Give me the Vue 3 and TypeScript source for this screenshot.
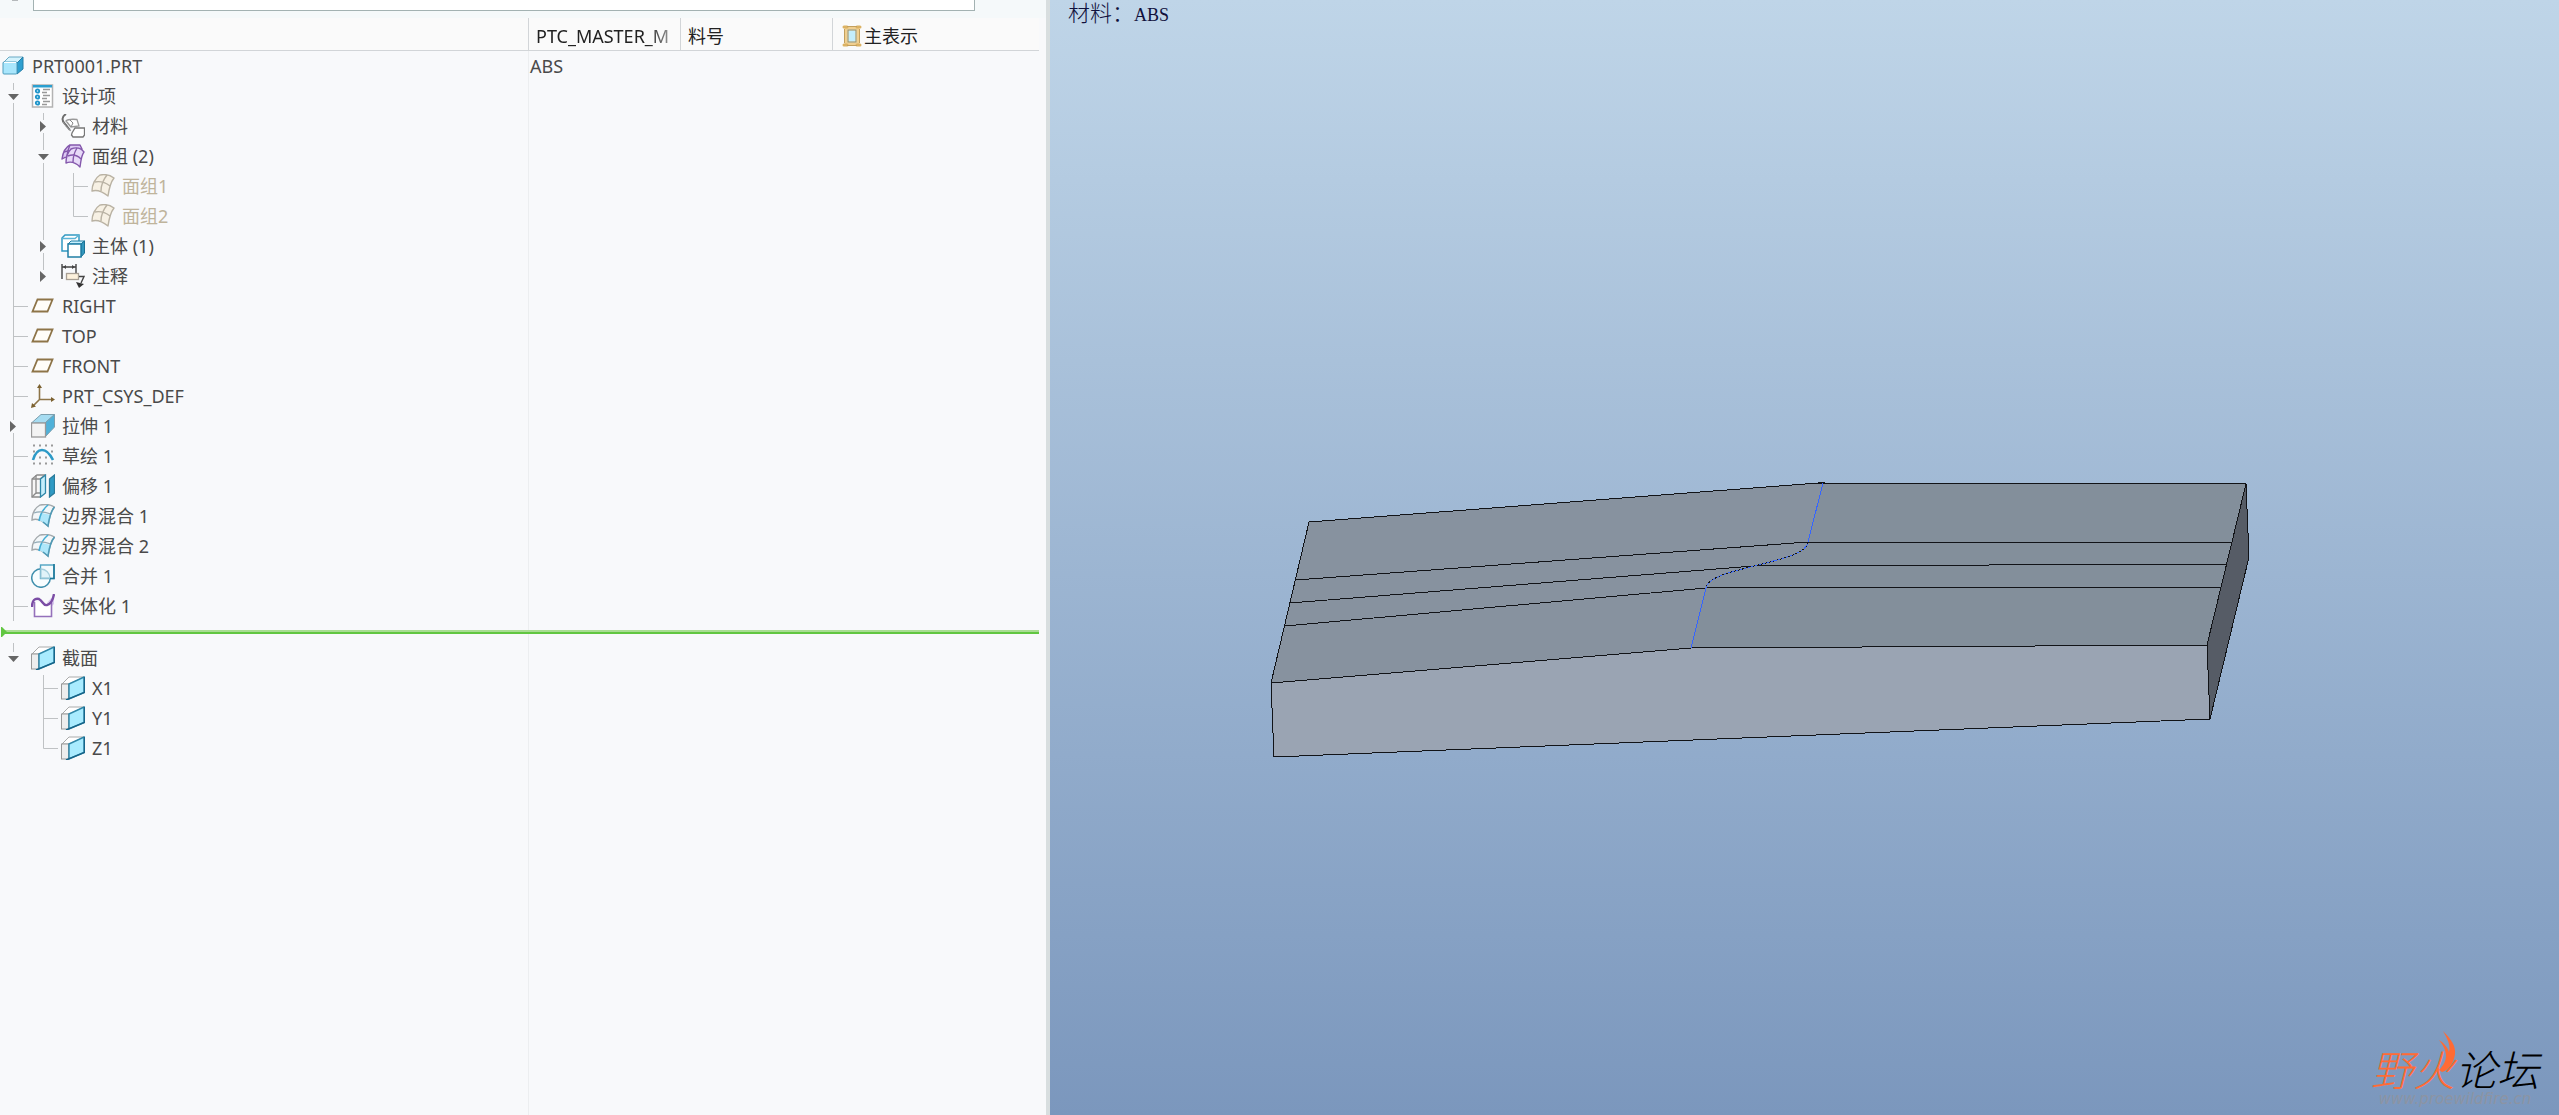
<script setup lang="ts">
import { computed, ref } from 'vue'

type Guide = 'blank' | 'line' | 'tee' | 'teeFirst' | 'elbow' | 'toggle' | 'toggleFirst' | 'toggleLast'

interface TreeRow {
  id: string
  label: string
  icon: string
  guides: Guide[]
  parent?: string
  open?: boolean
  muted?: boolean
  material?: string
}

const guidePaths: Record<Guide, string> = {
  blank: '',
  line: 'M13.5 0V30',
  tee: 'M13.5 0V30M14 15.5H28',
  teeFirst: 'M13.5 2V30M14 15.5H28',
  elbow: 'M13.5 0V15.5H28',
  toggle: 'M13.5 0V9M13.5 22V30',
  toggleFirst: 'M13.5 2V9M13.5 22V30',
  toggleLast: 'M13.5 0V9',
}

const modelRows: TreeRow[] = [
  { id: 'part', label: 'PRT0001.PRT', icon: 'part', guides: [], material: 'ABS' },
  { id: 'design', label: '设计项', icon: 'design', guides: ['toggleFirst'], open: true },
  { id: 'materials', label: '材料', icon: 'material', guides: ['line', 'toggleFirst'], parent: 'design', open: false },
  { id: 'quilts', label: '面组 (2)', icon: 'quilts', guides: ['line', 'toggle'], parent: 'design', open: true },
  { id: 'quilt1', label: '面组1', icon: 'quilt', guides: ['line', 'line', 'teeFirst'], parent: 'quilts', muted: true },
  { id: 'quilt2', label: '面组2', icon: 'quilt', guides: ['line', 'line', 'elbow'], parent: 'quilts', muted: true },
  { id: 'bodies', label: '主体 (1)', icon: 'body', guides: ['line', 'toggle'], parent: 'design', open: false },
  { id: 'notes', label: '注释', icon: 'note', guides: ['line', 'toggleLast'], parent: 'design', open: false },
  { id: 'right', label: 'RIGHT', icon: 'plane', guides: ['tee'] },
  { id: 'top', label: 'TOP', icon: 'plane', guides: ['tee'] },
  { id: 'front', label: 'FRONT', icon: 'plane', guides: ['tee'] },
  { id: 'csys', label: 'PRT_CSYS_DEF', icon: 'csys', guides: ['tee'] },
  { id: 'extrude', label: '拉伸 1', icon: 'extrude', guides: ['toggle'], open: false },
  { id: 'sketch', label: '草绘 1', icon: 'sketch', guides: ['tee'] },
  { id: 'offset', label: '偏移 1', icon: 'offset', guides: ['tee'] },
  { id: 'blend1', label: '边界混合 1', icon: 'blend', guides: ['tee'] },
  { id: 'blend2', label: '边界混合 2', icon: 'blend', guides: ['tee'] },
  { id: 'merge', label: '合并 1', icon: 'merge', guides: ['tee'] },
  { id: 'solidify', label: '实体化 1', icon: 'solidify', guides: ['tee'] },
]

const sectionRows: TreeRow[] = [
  { id: 'sections', label: '截面', icon: 'section', guides: ['toggleLast'], open: true },
  { id: 'x1', label: 'X1', icon: 'section', guides: ['blank', 'teeFirst'], parent: 'sections' },
  { id: 'y1', label: 'Y1', icon: 'section', guides: ['blank', 'tee'], parent: 'sections' },
  { id: 'z1', label: 'Z1', icon: 'section', guides: ['blank', 'elbow'], parent: 'sections' },
]

const allRows = [...modelRows, ...sectionRows]
const openIds = ref<string[]>(allRows.filter((r) => r.open).map((r) => r.id))

function isOpen(id: string): boolean {
  return openIds.value.includes(id)
}

function toggle(id: string): void {
  openIds.value = isOpen(id) ? openIds.value.filter((x) => x !== id) : [...openIds.value, id]
}

function isShown(row: TreeRow): boolean {
  if (!row.parent) return true
  const parent = allRows.find((r) => r.id === row.parent)
  return isOpen(row.parent) && (!parent || isShown(parent))
}

const groups = computed(() => [
  { id: 'model', rows: modelRows.filter(isShown) },
  { id: 'section', rows: sectionRows.filter(isShown) },
])
</script>

<template>
  <main class="workspace">
    <svg class="sprite" aria-hidden="true">
      <symbol id="i-part" viewBox="0 0 24 24">
        <path d="M2 9L8 3H22L16 9Z" fill="#d5f3fd" stroke="#6aa9c4" />
        <path d="M16 9L22 3V15L16 20Z" fill="#2f9fd0" stroke="#257fa8" />
        <rect x="2" y="8" width="14" height="12" rx="1" fill="#a9e6fc" stroke="#4f9dbd" />
        <path d="M3 8.500H15" stroke="#fff" />
      </symbol>
      <symbol id="i-design" viewBox="0 0 24 24">
        <rect x="1.500" y="1" width="20" height="22" fill="#fff" stroke="#b3b3b3" stroke-width="1.500" />
        <rect x="2" y="1" width="19" height="2.500" fill="#2b9fd0" />
        <g fill="#d9f3fd" stroke="#1f94c9" stroke-width="1.800">
          <circle cx="6.500" cy="7" r="1.700" /><circle cx="6.500" cy="13" r="1.700" /><circle cx="6.500" cy="19" r="1.700" />
        </g>
        <path d="M12 5.500H19M11 8.500H16M12 11.500H19M11 14.500H16M12 17.500H19M11 20.500H16" stroke="#999" stroke-width="1.300" />
      </symbol>
      <symbol id="i-material" viewBox="0 0 24 24">
        <path d="M5 0C0 3 1 7 4 10C6 12 7 14 9 16" fill="none" stroke="#6d6d6d" stroke-width="2" />
        <path d="M2 8C4 11 6 14 10 17" fill="none" stroke="#999" />
        <path d="M5 7C7 5 11 5 16 5.500L18 12L10 13C8 11 7 9 5 7Z" fill="#fff" stroke="#999" stroke-width="1.300" />
        <path d="M9 6L12 9L10 13" fill="none" stroke="#888" />
        <path d="M14 14H23.500V21L22 23H12L10.500 21L11 19Z" fill="#fff" stroke="#777" stroke-width="1.300" />
      </symbol>
      <symbol id="i-quilts" viewBox="0 0 24 24">
        <g fill="#dcc9f3" stroke="#8458ac" stroke-width="1.400" stroke-linejoin="round">
          <path d="M1 15C2 8 5 3 9 1H19L21 5L16 16C11 12 5 12 1 15Z" />
          <path d="M9 1C7 5 6 9 6 13M3 8C8 6 14 7 19 9" fill="none" />
          <path d="M5 19C5 13 7 8 10 5C15 3 20 4 23 8C20 12 20 17 19 23C15 19 10 17 5 19Z" fill="#e7daf8" />
          <path d="M16 4C13 9 12 14 12 18M7 12C12 10 17 12 20 15" fill="none" />
        </g>
      </symbol>
      <symbol id="i-quilt" viewBox="0 0 24 24">
        <g fill="#f7f1e4" stroke="#b9b2a3" stroke-width="1.400" stroke-linejoin="round">
          <path d="M1 17C1 11 4 4 9 1C14 0 19 1 23 4C19 9 18 15 17 22C12 18 7 15 1 17Z" />
          <path d="M16 1C12 6 10 11 10 17M4 8C9 7 15 9 19 12" fill="none" />
        </g>
      </symbol>
      <symbol id="i-body" viewBox="0 0 24 24">
        <path d="M1 4L4 1H18V14L14 17H1Z" fill="#fff" stroke="#3199c2" stroke-width="1.500" />
        <path d="M1 4.500H14L18 1" fill="none" stroke="#5bb4d6" stroke-width="1.400" />
        <path d="M7 10L10 7H23.500L20 10Z" fill="#c9f0fd" stroke="#217fa5" />
        <path d="M20 10L23.500 7V19L20 23Z" fill="#3297bd" stroke="#1a7194" />
        <rect x="7" y="10" width="13" height="13" fill="#fff" stroke="#217fa5" stroke-width="1.500" />
      </symbol>
      <symbol id="i-note" viewBox="0 0 24 24">
        <path d="M1 0V15M15 0V9M1 3H15" stroke="#444" stroke-width="1.400" fill="none" />
        <path d="M2 3L5 1V5ZM14 3L11 1V5Z" fill="#444" />
        <rect x="5.500" y="9.500" width="12" height="6" fill="#fdf1dc" stroke="#a89f94" stroke-width="1.300" />
        <path d="M18 12.500H23L20 19" fill="none" stroke="#444" stroke-width="1.400" />
        <path d="M15 18L23 20L18 24Z" fill="#333" />
      </symbol>
      <symbol id="i-plane" viewBox="0 0 24 24">
        <path d="M6.500 5.500H21.500L16.500 17.500H1.500Z" fill="#fffdf8" stroke="#8d7448" stroke-width="1.800" />
      </symbol>
      <symbol id="i-csys" viewBox="0 0 24 24">
        <path d="M8.500 2V15.500H22M8.500 15.500L2 22" fill="none" stroke="#8d7448" stroke-width="1.600" />
        <path d="M8.500 0L6 4H11ZM24 15.500L20 13V18ZM0 24L1 19L5 22.500Z" fill="#7b6130" />
      </symbol>
      <symbol id="i-extrude" viewBox="0 0 24 24">
        <path d="M0.500 9L10 0.500H23.500L14 9Z" fill="#a6dcf1" stroke="#7c9fae" />
        <path d="M14 9L23.500 0.500V13L14 23Z" fill="#4fb1d9" stroke="#7c9fae" />
        <rect x="0.500" y="9" width="14" height="14" fill="#f3f3f3" stroke="#999" stroke-width="1.300" />
      </symbol>
      <symbol id="i-sketch" viewBox="0 0 24 24">
        <path d="M2 1.500H4M8 1.500H10M14 1.500H16M20 1.500H22M2 7.500H4M20 7.500H22M8 13.500H10M14 13.500H16M2 19.500H4M8 19.500H10M14 19.500H16M20 19.500H22" stroke="#999" stroke-width="2" />
        <path d="M2 16C4 9 7 6 11 6C16 6 19 10 22 16" fill="none" stroke="#2d9ac7" stroke-width="2.600" />
      </symbol>
      <symbol id="i-offset" viewBox="0 0 24 24">
        <path d="M1 5L6 1H14V19L9 23H1Z" fill="#f7f7f7" stroke="#8b8b8b" stroke-width="1.300" />
        <path d="M1 5H9L14 1M5 1V20M1 23L5 19H9" fill="none" stroke="#8b8b8b" stroke-width="1.300" />
        <path d="M9.500 5L14.500 1V19L9.500 23Z" fill="#c6eefb" stroke="#2f87a9" stroke-width="1.300" />
        <path d="M18.500 5L23.500 1V19L18.500 23Z" fill="#2f9ac4" stroke="#2b7b9b" stroke-width="1.300" />
      </symbol>
      <symbol id="i-blend" viewBox="0 0 24 24">
        <path d="M1 16C1 9 4 4 9 1C14 0 19 0 23.500 3C19 8 18 15 17 22C12 17 6 14 1 16Z" fill="#f3f7f9" stroke="#a3a9ac" stroke-width="1.400" />
        <path d="M11 9L20 11L17 21L8 16Z" fill="#aee7fa" />
        <path d="M17 1C11 6 9 11 8 17" fill="none" stroke="#42acd4" stroke-width="1.600" />
        <path d="M3 9C8 7 14 8 20 10" fill="none" stroke="#91aab5" stroke-width="1.300" />
        <path d="M23.500 3C19 8 18 15 17 22L12 18" fill="none" stroke="#4f9ab6" stroke-width="1.600" />
      </symbol>
      <symbol id="i-merge" viewBox="0 0 24 24">
        <circle cx="10" cy="14" r="9.300" fill="#f8fdff" stroke="#3f8fad" stroke-width="1.500" />
        <rect x="9.500" y="1" width="13.500" height="13.500" fill="#f3fafc" stroke="#4fa3c2" stroke-width="1.400" />
        <path d="M10 5A9.300 9.300 0 0 1 19 14H10Z" fill="#e1f3f9" stroke="#a7cfdd" stroke-width="1.300" />
        <path d="M23 0V14.500H19" fill="none" stroke="#1d7899" stroke-width="1.600" />
      </symbol>
      <symbol id="i-solidify" viewBox="0 0 24 24">
        <path d="M14 11L23 1V10L20 13Z" fill="#d9c8ee" />
        <path d="M3.500 8V22.500H20.500V9" fill="#fff" stroke="#9571bb" stroke-width="1.600" />
        <path d="M1 13C1 6 4 4 8 5C12 7 12 12 16 11C20 10 22 6 23 0" fill="none" stroke="#7b4da5" stroke-width="2.400" />
      </symbol>
      <symbol id="i-section" viewBox="0 0 24 24">
        <path d="M1 8L8 1H23L8 8Z" fill="#fff" stroke="#aaa" />
        <rect x="0.500" y="8" width="7" height="15" fill="#eee" stroke="#999" />
        <path d="M8 8L23 1V16.500L8 23Z" fill="#a9ebff" stroke="#2f87a9" stroke-width="1.400" />
        <path d="M23.500 1V16.500L5 24" fill="none" stroke="#17658a" stroke-width="1.400" />
      </symbol>
    </svg>

    <section class="tree-pane">
      <div class="search-bar">
        <i class="search-tip"></i>
        <input type="text" class="search" aria-label="搜索" />
      </div>

      <div class="tree-body">
        <table class="tree">
          <colgroup>
            <col class="col-name" />
            <col class="col-field" />
            <col class="col-field" />
            <col />
          </colgroup>
          <thead>
            <tr>
              <td></td>
              <th scope="col"><span class="fade">PTC_MASTER_M</span></th>
              <th scope="col">料号</th>
              <th scope="col">
                <span class="rep">
                  <svg width="20" height="22" viewBox="0 0 20 22" aria-hidden="true">
                    <rect x="4" y="3" width="12" height="16" fill="#c4edfb" stroke="#f0cf90" stroke-width="3" />
                    <path d="M2 2H5M15 2H18M2 20H5M15 20H18" stroke="#dcb263" stroke-width="3" stroke-linecap="round" />
                    <rect x="6" y="5" width="8" height="12" fill="none" stroke="#a58a55" />
                    <path d="M5 1.500H15M5 20.500H15M2.500 4V18M17.500 4V18" stroke="#c39f5c" />
                  </svg>
                  主表示
                </span>
              </th>
            </tr>
          </thead>
          <template v-for="group in groups" :key="group.id">
            <tbody>
              <tr v-for="row in group.rows" :key="row.id" class="row">
                <td>
                  <div class="node" :class="{ muted: row.muted }">
                    <span v-for="(guide, i) in row.guides" :key="i" class="guide">
                      <svg width="30" height="30" viewBox="0 0 30 30" aria-hidden="true">
                        <path :d="guidePaths[guide]" fill="none" stroke="#bfc2c4" />
                      </svg>
                      <button
                        v-if="row.open !== undefined && i === row.guides.length - 1"
                        type="button"
                        class="toggle"
                        :aria-expanded="isOpen(row.id)"
                        :aria-label="row.label"
                        @click="toggle(row.id)"
                      >
                        <svg width="12" height="12" viewBox="0 0 12 12" aria-hidden="true">
                          <path :d="isOpen(row.id) ? 'M1 4H12L6.5 10Z' : 'M3 1V12L9 6.5Z'" fill="#666" />
                        </svg>
                      </button>
                    </span>
                    <svg class="icon" width="24" height="24" aria-hidden="true"><use :href="'#i-' + row.icon" /></svg>
                    <span>{{ row.label }}</span>
                  </div>
                </td>
                <td class="value">{{ row.material }}</td>
                <td></td>
                <td></td>
              </tr>
            </tbody>
            <tbody v-if="group.id === 'model'">
              <tr>
                <td colspan="4">
                  <div class="insert"><i class="insert-head"></i><i class="insert-line"></i></div>
                </td>
              </tr>
            </tbody>
          </template>
        </table>
      </div>
    </section>

    <div class="splitter"></div>

    <section class="viewer">
      <p class="material"><span>材料：</span><span class="material-name">ABS</span></p>

      <svg class="model" viewBox="0 0 1509 1115" role="img" aria-label="PRT0001">
        <g shape-rendering="crispEdges">
          <path d="M259 522L768 483L1196 484L1157 645L641 648L221 683Z" fill="#87929f" />
          <path d="M773 483L1196 484L1157 645L641 648L656 588C658 573 690 570 704 565C722 559 757 555 758 541Z" fill="#838f9b" />
          <path d="M221 683L641 648L1157 645L1160 719L224 757Z" fill="#9aa4b3" />
          <path d="M1196 484L1199 557L1160 719L1157 645Z" fill="#565c66" />
          <g fill="none" stroke="#111317">
            <path d="M259 522L768 483L1196 484L1199 557L1160 719L224 757L221 683Z" />
            <path d="M246 580L758 542H1181M240 603L704 566L1176 564M235 626L656 588L1170 587" />
            <path d="M221 683L641 648L1157 645M1196 484L1157 645L1160 719" />
          </g>
          <g fill="none" stroke="#3565ff">
            <path d="M773 483L758 542M656 588L641 648" />
            <path d="M758 542C757 555 722 561 704 566C686 571 658 576 656 588" />
          </g>
          <path d="M758 542C757 555 722 561 704 566C686 571 658 576 656 588" fill="none" stroke="#111317" stroke-dasharray="2 2" />
        </g>
      </svg>

      <div class="brand">
        <div class="brand-name">
          <span class="fire">野火</span><span>论坛</span>
          <svg class="flame" width="18" height="42" viewBox="0 0 18 42" aria-hidden="true">
            <path d="M5 0C13 8 18 15 17 23C16 32 10 40 4 41L1 39C6 34 8 29 8 25C8 19 5 14 1 9C6 12 10 17 11 21C13 14 9 7 5 0Z" fill="#ff6b35" />
          </svg>
        </div>
        <div class="brand-url">www.proewildfire.cn</div>
      </div>
    </section>
  </main>
</template>

<style>
body {
  margin: 0;
}
</style>

<style scoped>
.workspace {
  display: grid;
  grid-template-columns: 1046fr 4px 1509fr;
  min-height: 100vh;
  font-family: "Noto Sans", "Noto Sans CJK SC", sans-serif;
  font-size: 18px;
  line-height: 24px;
  color: #4a4a4a;
}
.sprite {
  position: absolute;
  width: 0;
  height: 0;
}
.tree-pane {
  display: flex;
  flex-direction: column;
  min-width: 0;
  background: #f8f9fb;
}
.search-bar {
  display: flex;
  align-items: flex-start;
  box-sizing: border-box;
  height: 18px;
  padding-right: 71px;
  background: #f5f9fa;
}
.search-tip {
  width: 6px;
  height: 1px;
  margin: 0 15px 0 12px;
  background: #b5b9bb;
}
.search {
  box-sizing: border-box;
  flex: 1;
  min-width: 0;
  height: 11px;
  padding: 0 8px;
  border: 1px solid #a3b2b2;
  border-top: 0;
  border-radius: 0;
  background: #fff;
  outline: none;
}
.tree-body {
  flex: 1;
  padding-right: 7px;
  background: linear-gradient(to right, transparent 528px, #eceef0 528px, #eceef0 529px, transparent 529px);
}
.tree {
  width: 100%;
  border-spacing: 0;
  table-layout: fixed;
}
.col-name {
  width: 528px;
}
.col-field {
  width: 152px;
}
.tree td,
.tree th {
  padding: 0;
}
.tree thead td,
.tree thead th {
  box-sizing: border-box;
  height: 33px;
  border-bottom: 1px solid #d2d5d8;
  background: #fafafa;
}
.tree thead th {
  padding-top: 3px;
  padding-left: 7px;
  border-left: 1px solid #d2d5d8;
  text-align: left;
  font-weight: 400;
  color: #222;
}
.fade {
  display: block;
  margin-right: 4px;
  white-space: nowrap;
  -webkit-mask-image: linear-gradient(to right, #000 80%, rgba(0, 0, 0, 0.3));
  mask-image: linear-gradient(to right, #000 80%, rgba(0, 0, 0, 0.3));
}
.rep {
  display: flex;
  align-items: center;
  gap: 2px;
  margin-left: 2px;
}
.row td {
  height: 30px;
}
.tree .value {
  padding-left: 2px;
}
.node {
  display: flex;
  align-items: center;
  height: 30px;
  white-space: nowrap;
}
.muted {
  color: #bfb49c;
}
.guide {
  position: relative;
  flex: none;
  width: 30px;
  height: 30px;
}
.guide svg {
  display: block;
}
.toggle {
  position: absolute;
  top: 9px;
  left: 7px;
  width: 12px;
  height: 12px;
  padding: 0;
  border: 0;
  background: none;
  cursor: pointer;
}
.icon {
  flex: none;
  margin: 0 7px 0 1px;
}
.insert {
  display: flex;
  align-items: center;
  height: 22px;
}
.insert-head {
  width: 6px;
  height: 10px;
  margin-left: 1px;
  background: #61c641;
  clip-path: polygon(0 0, 1px 0, 6px 5px, 1px 10px, 0 10px);
}
.insert-line {
  flex: 1;
  height: 4px;
  margin-left: -3px;
  background: linear-gradient(#a9dd93 50%, #61c641 50%);
}
.splitter {
  background: #d8dedf;
}
.viewer {
  position: relative;
  overflow: hidden;
  background: linear-gradient(#bfd5e8, #7b97bd);
}
.material {
  position: absolute;
  top: 2px;
  left: 18px;
  display: flex;
  align-items: baseline;
  margin: 0;
  font-family: "Liberation Serif", "Noto Sans CJK SC", serif;
  font-size: 22px;
  font-weight: 300;
  color: #10103c;
}
.material-name {
  font-size: 18px;
}
.model {
  display: block;
  width: 100%;
  height: 100%;
}
.brand {
  position: absolute;
  right: 20px;
  bottom: 6px;
  display: flex;
  flex-direction: column;
  align-items: center;
}
.brand-name {
  position: relative;
  font-family: "Liberation Sans", "Noto Sans CJK SC", sans-serif;
  font-size: 42px;
  font-style: italic;
  font-weight: 300;
  line-height: 34px;
  color: #000;
}
.fire {
  color: #ff6b35;
}
.flame {
  position: absolute;
  top: -24px;
  left: 67px;
}
.brand-url {
  font-family: "DejaVu Sans", sans-serif;
  font-size: 15px;
  font-style: italic;
  line-height: 20px;
  color: #8c94a3;
}
</style>
